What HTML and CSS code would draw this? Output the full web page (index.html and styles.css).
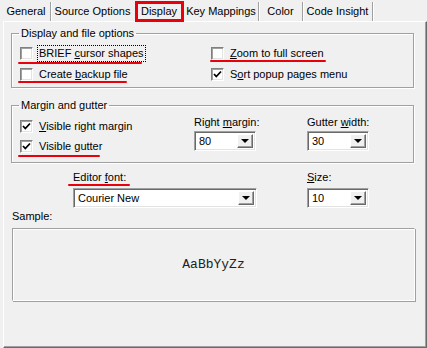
FILE: index.html
```html
<!DOCTYPE html>
<html lang="en">
  <head>
    <meta charset="UTF-8" />
    <title>Editor Options - Display</title>
    <link rel="stylesheet" href="styles.css">
  </head>
  <body>
    <div class="tabs">
      <div class="tab tab-general">General</div>
      <div class="tab tab-source">Source Options</div>
      <div class="tab tab-display selected">Display</div>
      <div class="tab tab-keys">Key Mappings</div>
      <div class="tab tab-color">Color</div>
      <div class="tab tab-insight">Code Insight</div>
    </div>

    <div class="panel">
      <fieldset class="group">
        <legend>Display and file options</legend>
        <div class="options-grid">
          <div class="check"><span class="box"></span><span class="label focused">BRIEF <u>c</u>ursor shapes</span></div>
          <div class="check"><span class="box"></span><span class="label"><u>Z</u>oom to full screen</span></div>
          <div class="check"><span class="box"></span><span class="label">Create <u>b</u>ackup file</span></div>
          <div class="check"><span class="box checked"><svg width="11" height="11" viewBox="0 0 11 11"><polyline points="2,5 4.3,7.5 9,2.5" /></svg></span><span class="label">S<u>o</u>rt popup pages menu</span></div>
        </div>
      </fieldset>

      <fieldset class="group group-margin">
        <legend>Margin and gutter</legend>
        <div class="margin-grid">
          <div>
            <div class="check"><span class="box checked"><svg width="11" height="11" viewBox="0 0 11 11"><polyline points="2,5 4.3,7.5 9,2.5" /></svg></span><span class="label"><u>V</u>isible right margin</span></div>
            <div class="check"><span class="box checked"><svg width="11" height="11" viewBox="0 0 11 11"><polyline points="2,5 4.3,7.5 9,2.5" /></svg></span><span class="label">Visible <u>g</u>utter</span></div>
          </div>
          <div class="field">
            <div class="field-label">Right <u>m</u>argin:</div>
            <div class="combo combo-small"><span class="value">80</span><span class="drop"></span></div>
          </div>
          <div class="field">
            <div class="field-label">Gutter <u>w</u>idth:</div>
            <div class="combo combo-small"><span class="value">30</span><span class="drop"></span></div>
          </div>
        </div>
      </fieldset>

      <div class="font-row">
        <div class="field">
          <div class="field-label">Editor <u>f</u>ont:</div>
          <div class="combo combo-font"><span class="value">Courier New</span><span class="drop"></span></div>
        </div>
        <div class="field">
          <div class="field-label"><u>S</u>ize:</div>
          <div class="combo combo-small"><span class="value">10</span><span class="drop"></span></div>
        </div>
      </div>

      <div class="sample-label">Sample:</div>
      <div class="sample">AaBbYyZz</div>
    </div>

    <!-- red annotation marks drawn over the dialog -->
    <div class="mark-box"></div>
    <div class="mark mark-brief"></div>
    <div class="mark mark-backup"></div>
    <div class="mark mark-zoom"></div>
    <div class="mark mark-gutter"></div>
    <div class="mark mark-font"></div>
  </body>
</html>
```

FILE: styles.css
```css
body {
  margin: 0;
  width: 427px;
  height: 348px;
  overflow: hidden;
  position: relative;
  background-color: #f0f0f0;
  font-family: "Liberation Sans", Arial, sans-serif;
  font-size: 11px;
  line-height: 13px;
  color: #000;
}

u {
  text-decoration: underline;
  text-underline-offset: 1px;
}

/* tab strip */
.tabs {
  display: flex;
  height: 19px;
  padding-top: 2px;
  padding-left: 2px;
}

.tab {
  box-sizing: border-box;
  height: 19px;
  line-height: 19px;
  text-align: center;
  border-right: 1px solid #a0a0a0;
  box-shadow: 1px 0 0 #fff;
}

.tab-general { width: 49px; }
.tab-source { width: 83px; border-right: none; box-shadow: none; }
.tab-display { width: 50px; border-right: none; box-shadow: none; }
.tab-keys { width: 75px; }
.tab-color { width: 44px; }
.tab-insight { width: 70px; }

/* page of the tab control */
.panel {
  box-sizing: border-box;
  margin-left: 3px;
  width: 424px;
  height: 327px;
  border-top: 1px solid #fff;
  border-left: 1px solid #fff;
  border-right: 1px solid #696969;
  border-bottom: 1px solid #696969;
  box-shadow: inset -1px -1px 0 #a0a0a0;
  padding-top: 5px;
}

.group {
  margin: 0 0 0 7px;
  width: 403px;
  box-sizing: border-box;
  min-width: 0;
  padding: 3px 8px 2px 8px;
  border: 1px solid #a0a0a0;
  box-shadow: 1px 1px 0 #fff, inset 1px 1px 0 #fff;
}

.group legend {
  padding: 0 2px;
  margin-left: -1px;
  line-height: 13px;
}

.group-margin {
  margin-top: 11px;
  padding-top: 4px;
  padding-bottom: 6px;
}

.options-grid {
  display: grid;
  grid-template-columns: 191px 1fr;
  grid-auto-rows: 21px;
}

.check {
  display: flex;
  align-items: center;
  height: 21px;
}

.margin-grid .check {
  height: 20px;
}

.box {
  box-sizing: border-box;
  width: 13px;
  height: 13px;
  background-color: #fff;
  border: 1px solid;
  border-color: #808080 #fff #fff #808080;
  box-shadow: inset 1px 1px 0 #a0a0a0, inset -1px -1px 0 #e3e3e3;
  margin-right: 4px;
  flex-shrink: 0;
}

.box svg {
  display: block;
  fill: none;
  stroke: #000;
  stroke-width: 1.8;
}

.label {
  padding: 1px;
  border: 1px solid transparent;
}

.label.focused {
  border: 1px dotted #000;
}

.margin-grid {
  display: grid;
  grid-template-columns: 174px 113px 1fr;
}

.field-label {
  height: 13px;
}

.combo {
  box-sizing: border-box;
  display: flex;
  height: 20px;
  margin-top: 2px;
  background-color: #fff;
  border: 1px solid;
  border-color: #a0a0a0 #fff #fff #a0a0a0;
  box-shadow: inset 1px 1px 0 #696969, inset -1px -1px 0 #e3e3e3;
  padding: 2px;
}

.combo .value {
  flex: 1;
  padding-left: 2px;
  line-height: 14px;
}

.combo .drop {
  position: relative;
  box-sizing: border-box;
  width: 16px;
  height: 14px;
  background-color: #f0f0f0;
  border: 1px solid;
  border-color: #fff #696969 #696969 #fff;
  box-shadow: inset -1px -1px 0 #a0a0a0;
}

/* small arrow inside the drop button */
.combo .drop::after {
  content: "";
  position: absolute;
  left: 3px;
  top: 4px;
  border-left: 4px solid transparent;
  border-right: 4px solid transparent;
  border-top: 4px solid #000;
}

.combo-small {
  width: 62px;
}

.combo-font {
  width: 184px;
}

.font-row {
  display: grid;
  grid-template-columns: 234px 1fr;
  margin-top: 8px;
  padding-left: 69px;
}

.font-row .combo {
  margin-top: 4px;
}

.sample-label {
  margin: 2px 0 0 8px;
}

.sample {
  box-sizing: border-box;
  margin: 5px 0 0 8px;
  width: 403px;
  height: 73px;
  display: flex;
  align-items: center;
  justify-content: center;
  border: 1px solid;
  border-color: #a0a0a0 #fff #fff #a0a0a0;
  box-shadow: inset 1px 1px 0 #fff, 1px 1px 0 #a0a0a0;
  font-family: "Liberation Mono", "Courier New", monospace;
  font-size: 13px;
  color: #222;
}

/* red annotation marks */
.mark-box {
  position: absolute;
  left: 135px;
  top: 1px;
  width: 49px;
  height: 21px;
  box-sizing: border-box;
  border: 3px solid #e8000b;
}

.mark {
  position: absolute;
  height: 2px;
  border-radius: 1px;
  background-color: #e8000b;
}

.mark-brief { left: 18px; top: 62px; width: 124px; }
.mark-backup { left: 18px; top: 81px; width: 109px; }
.mark-zoom { left: 210px; top: 60px; width: 116px; }
.mark-gutter { left: 18px; top: 155px; width: 82px; }
.mark-font { left: 68px; top: 184px; width: 62px; }
```
